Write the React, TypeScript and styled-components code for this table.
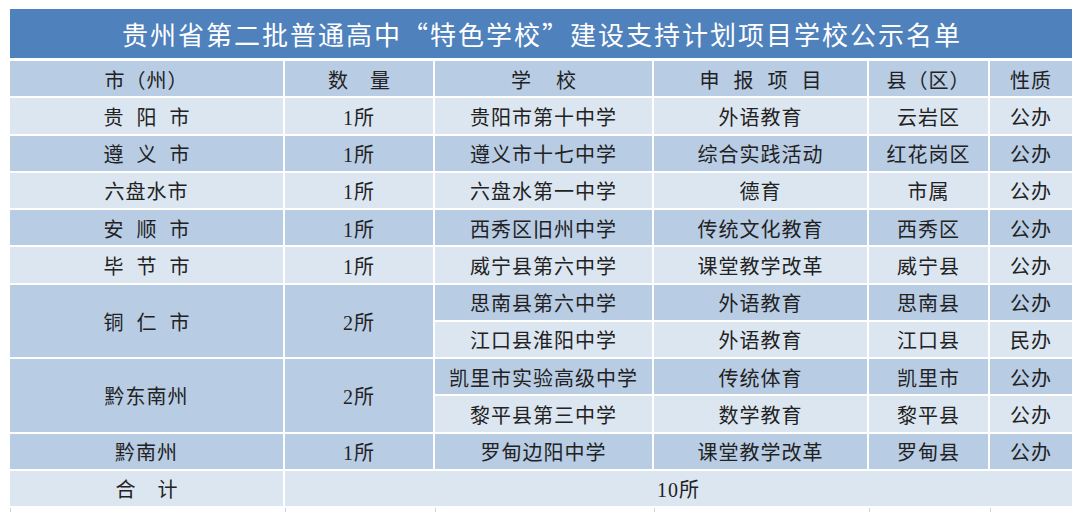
import React from "react";
import styled, { createGlobalStyle } from "styled-components";

const Global = createGlobalStyle`
  html, body { margin: 0; padding: 0; background: #ffffff; overflow: hidden; }
  body { font-family: "Liberation Serif", "Noto Sans CJK SC", serif; }
`;

const Page = styled.div`
  padding: 9px 8px 0 10px;
  width: 1062px;
`;

const Title = styled.div`
  height: 49px;
  margin-bottom: 3px;
  background: #4f81bd;
  color: #ffffff;
  display: flex;
  align-items: center;
  justify-content: center;
  font-family: "Noto Sans CJK SC", sans-serif;
  font-size: 26px;
  letter-spacing: 2px;
  padding-left: 2px;
`;

const Grid = styled.div`
  display: grid;
  grid-template-columns: 273px 148px 217px 213px 119px 82px;
  grid-template-rows: repeat(12, 35.25px) 4px;
  gap: 2px;
  background: #ffffff;
`;

type Tone = "dark" | "light";

const toneBg: Record<Tone, string> = {
  dark: "#b8cce4",
  light: "#dce6f1",
};

const Cell = styled.div<{ $tone: Tone; $rows?: number; $cols?: number }>`
  background: ${(p) => toneBg[p.$tone]};
  grid-row: span ${(p) => p.$rows ?? 1};
  grid-column: span ${(p) => p.$cols ?? 1};
  display: flex;
  align-items: center;
  justify-content: center;
  padding-top: 1px;
  color: #222222;
  font-size: 20px;
  letter-spacing: 1px;
  white-space: nowrap;
  font-family: "Liberation Serif", "Noto Sans CJK SC", serif;
`;

const TailCell = styled.div`
  background: #ffffff;
  border-left: 1px solid #c9d4e2;
  &:first-child { border-left: none; }
`;

const Spaced = styled.span<{ $ls: number }>`
  letter-spacing: ${(p) => p.$ls}px;
  margin-right: -${(p) => p.$ls}px;
`;

type Sub = { school: string; project: string; county: string; kind: string };
type Group = { city: React.ReactNode; count: string; subs: Sub[] };

const sp = (t: string, ls: number) => <Spaced $ls={ls}>{t}</Spaced>;

const groups: Group[] = [
  { city: sp("贵阳市", 13), count: "1所", subs: [{ school: "贵阳市第十中学", project: "外语教育", county: "云岩区", kind: "公办" }] },
  { city: sp("遵义市", 13), count: "1所", subs: [{ school: "遵义市十七中学", project: "综合实践活动", county: "红花岗区", kind: "公办" }] },
  { city: "六盘水市", count: "1所", subs: [{ school: "六盘水第一中学", project: "德育", county: "市属", kind: "公办" }] },
  { city: sp("安顺市", 13), count: "1所", subs: [{ school: "西秀区旧州中学", project: "传统文化教育", county: "西秀区", kind: "公办" }] },
  { city: sp("毕节市", 13), count: "1所", subs: [{ school: "威宁县第六中学", project: "课堂教学改革", county: "威宁县", kind: "公办" }] },
  {
    city: sp("铜仁市", 13),
    count: "2所",
    subs: [
      { school: "思南县第六中学", project: "外语教育", county: "思南县", kind: "公办" },
      { school: "江口县淮阳中学", project: "外语教育", county: "江口县", kind: "民办" },
    ],
  },
  {
    city: "黔东南州",
    count: "2所",
    subs: [
      { school: "凯里市实验高级中学", project: "传统体育", county: "凯里市", kind: "公办" },
      { school: "黎平县第三中学", project: "数学教育", county: "黎平县", kind: "公办" },
    ],
  },
  { city: "黔南州", count: "1所", subs: [{ school: "罗甸边阳中学", project: "课堂教学改革", county: "罗甸县", kind: "公办" }] },
];

const toneOf = (i: number): Tone => (i % 2 === 0 ? "dark" : "light");

export default function App() {
  const cells: React.ReactNode[] = [];
  let rowIndex = 1;
  groups.forEach((g, gi) => {
    const first = toneOf(rowIndex);
    const n = g.subs.length;
    cells.push(
      <Cell key={`c${gi}`} $tone={first} $rows={n}>{g.city}</Cell>,
      <Cell key={`n${gi}`} $tone={first} $rows={n}>{g.count}</Cell>
    );
    g.subs.forEach((s, si) => {
      const t = toneOf(rowIndex);
      cells.push(
        <Cell key={`s${gi}-${si}`} $tone={t}>{s.school}</Cell>,
        <Cell key={`p${gi}-${si}`} $tone={t}>{s.project}</Cell>,
        <Cell key={`y${gi}-${si}`} $tone={t}>{s.county}</Cell>,
        <Cell key={`k${gi}-${si}`} $tone={t}>{s.kind}</Cell>
      );
      rowIndex++;
    });
  });

  return (
    <>
      <Global />
      <Page>
        <Title>贵州省第二批普通高中“特色学校”建设支持计划项目学校公示名单</Title>
        <Grid>
          <Cell $tone="dark">市（州）</Cell>
          <Cell $tone="dark">{sp("数量", 22)}</Cell>
          <Cell $tone="dark">{sp("学校", 25)}</Cell>
          <Cell $tone="dark">{sp("申报项目", 14)}</Cell>
          <Cell $tone="dark">县（区）</Cell>
          <Cell $tone="dark">性质</Cell>
          {cells}
          <Cell $tone="light">{sp("合计", 22)}</Cell>
          <Cell $tone="light" $cols={5}>10所</Cell>
          <TailCell />
          <TailCell />
          <TailCell />
          <TailCell />
          <TailCell />
          <TailCell />
        </Grid>
      </Page>
    </>
  );
}
